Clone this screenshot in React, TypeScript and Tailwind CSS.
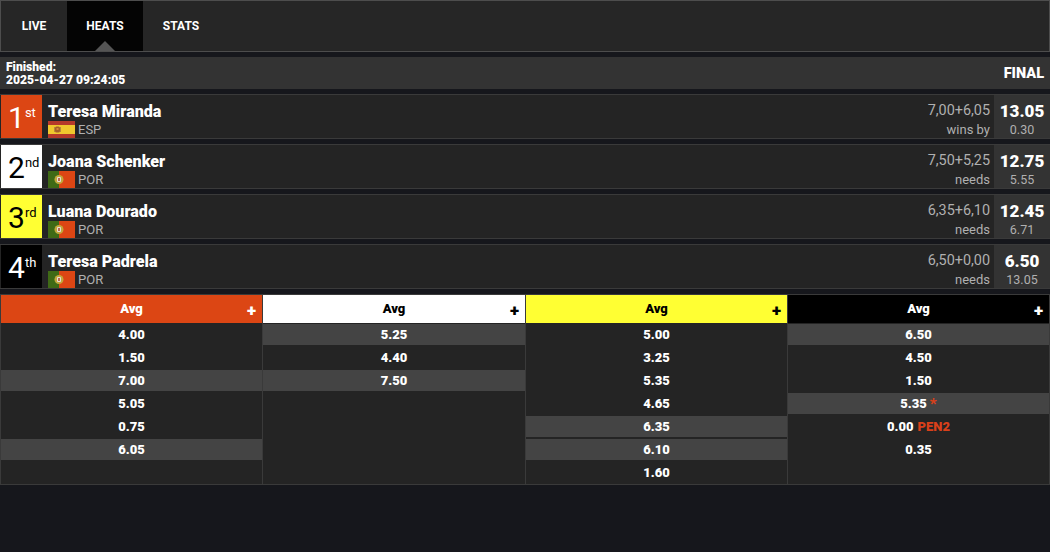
import React from "react";

const Spain = () => (
  <svg width="27" height="17" viewBox="0 0 27 17" className="block shrink-0">
    <rect width="27" height="17" fill="#b5392a" />
    <rect y="4" width="27" height="9" fill="#f0c82e" />
    <rect x="7" y="5.5" width="5" height="6" rx="1.5" fill="#a5612a" />
    <rect x="6" y="6" width="1" height="5" fill="#b9893a" />
    <rect x="12" y="6" width="1" height="5" fill="#b9893a" />
    <rect x="8.5" y="7" width="2" height="2" fill="#d98a3a" />
  </svg>
);
const Portugal = () => (
  <svg width="27" height="17" viewBox="0 0 27 17" className="block shrink-0">
    <rect width="27" height="17" fill="#dc4614" />
    <rect width="11" height="17" fill="#3f6a16" />
    <circle cx="11" cy="8.5" r="4.5" fill="#c2a83c" />
    <rect x="9" y="6" width="4" height="5" rx="1" fill="#e6e0d8" />
    <rect x="10" y="7" width="2" height="3" fill="#c06a50" />
  </svg>
);

const riders = [
  { n: "1", s: "st", bg: "bg-[#dc4614]", fg: "text-white", name: "Teresa Miranda", c: "ESP", sum: "7,00+6,05", lab: "wins by", tot: "13.05", sub: "0.30" },
  { n: "2", s: "nd", bg: "bg-white", fg: "text-black", name: "Joana Schenker", c: "POR", sum: "7,50+5,25", lab: "needs", tot: "12.75", sub: "5.55" },
  { n: "3", s: "rd", bg: "bg-[#ffff33]", fg: "text-black", name: "Luana Dourado", c: "POR", sum: "6,35+6,10", lab: "needs", tot: "12.45", sub: "6.71" },
  { n: "4", s: "th", bg: "bg-black", fg: "text-white", name: "Teresa Padrela", c: "POR", sum: "6,50+0,00", lab: "needs", tot: "6.50", sub: "13.05" },
];

type Cell = { v: string; hi?: boolean; star?: boolean; pen?: string };
const cols: { bg: string; fg: string; w: string; cells: Cell[] }[] = [
  {
    bg: "bg-[#dc4614]", fg: "text-white", w: "w-[261px]",
    cells: [{ v: "4.00" }, { v: "1.50" }, { v: "7.00", hi: true }, { v: "5.05" }, { v: "0.75" }, { v: "6.05", hi: true }],
  },
  {
    bg: "bg-white", fg: "text-black", w: "w-[263px]",
    cells: [{ v: "5.25", hi: true }, { v: "4.40" }, { v: "7.50", hi: true }],
  },
  {
    bg: "bg-[#ffff33]", fg: "text-black", w: "w-[262px]",
    cells: [{ v: "5.00" }, { v: "3.25" }, { v: "5.35" }, { v: "4.65" }, { v: "6.35", hi: true }, { v: "6.10", hi: true }, { v: "1.60" }],
  },
  {
    bg: "bg-black", fg: "text-white", w: "flex-1",
    cells: [{ v: "6.50", hi: true }, { v: "4.50" }, { v: "1.50" }, { v: "5.35", hi: true, star: true }, { v: "0.00", pen: "PEN2" }, { v: "0.35" }],
  },
];

export default function App() {
  return (
    <div className="w-[1050px] h-[552px] overflow-hidden bg-[#16171c] text-white font-['Roboto',sans-serif]">
      <div className="h-[52px] flex bg-[#262626] border border-[#4d4d4d] text-[12px] font-bold">
        <div className="w-[66px] flex items-center justify-center pb-[1px]">LIVE</div>
        <div className="relative w-[76px] bg-[#040404] flex items-center justify-center pb-[1px]">
          HEATS
          <div className="absolute bottom-0 left-[28px] w-0 h-0 border-x-[10px] border-x-transparent border-b-[10px] border-b-[#555555]" />
        </div>
        <div className="w-[76px] flex items-center justify-center pb-[1px]">STATS</div>
      </div>

      <div className="mt-[5px] h-[32px] flex items-center justify-between pl-[6px] pr-[6px] bg-[#333333] font-black">
        <div className="text-[12.1px] leading-[13px] pt-[1px]">
          <div>Finished:</div>
          <div>2025-04-27 09:24:05</div>
        </div>
        <div className="text-[14.5px] pt-[1px]">FINAL</div>
      </div>

      <div className="mt-[5px] flex flex-col gap-[5px]">
        {riders.map((r) => (
          <div key={r.n} className="h-[45px] flex bg-[#242424] border-y border-[#3a3a3a] pl-[1px]">
            <div className={`w-[41px] flex pl-[7px] ${r.bg} ${r.fg}`}>
              <span className="text-[30px] leading-[46px] font-normal">{r.n}</span>
              <span className="text-[13px] leading-[36px] font-normal">{r.s}</span>
            </div>
            <div className="ml-[6px] flex flex-col">
              <div className="text-[16.1px] font-black leading-[20px] mt-[7px] h-[19px] whitespace-nowrap">{r.name}</div>
              <div className="flex items-center mt-auto">
                {r.c === "ESP" ? <Spain /> : <Portugal />}
                <span className="ml-[3px] text-[13px] leading-[17px] text-[#b0b0b0]">{r.c}</span>
              </div>
            </div>
            <div className="ml-auto mr-[4px] flex flex-col items-end text-[#b0b0b0]">
              <div className="text-[14.4px] leading-[20px] mt-[6px]">{r.sum}</div>
              <div className="text-[13px] leading-[16px] mt-[1px]">{r.lab}</div>
            </div>
            <div className="w-[56px] bg-[#333333] flex flex-col items-center">
              <div className="text-[17px] font-black leading-[22px] mt-[5px]">{r.tot}</div>
              <div className="text-[12.5px] leading-[14px] mt-[1px] text-[#b0b0b0]">{r.sub}</div>
            </div>
          </div>
        ))}
      </div>

      <div className="mt-[5px] flex h-[191px] border border-[#3a3a3a] bg-[#242424]">
        {cols.map((c, i) => (
          <div key={i} className={`${c.w} flex flex-col ${i > 0 ? "border-l border-[#3a3a3a]" : ""}`}>
            <div className={`relative h-[28px] shrink-0 flex items-center justify-center text-[13px] font-black ${c.bg} ${c.fg}`}>
              <span>Avg</span>
              <span className="absolute right-[6px] top-[5px] text-[17px] leading-[20px] font-black">+</span>
            </div>
            <div className="flex flex-col">
              {c.cells.map((x, j) => (
                <div key={j} className="h-[23px] py-[1px]">
                  <div className={`h-[21px] flex items-center justify-center text-[13px] font-black ${x.hi ? "bg-[#444444]" : ""}`}>
                    <span>{x.v}</span>
                    {x.star && <span className="ml-[3px] text-[15px] leading-[21px] pt-[2px] text-[#d9401a]">*</span>}
                    {x.pen && <span className="ml-[4px] text-[#d9401a]">{x.pen}</span>}
                  </div>
                </div>
              ))}
            </div>
          </div>
        ))}
      </div>
    </div>
  );
}
